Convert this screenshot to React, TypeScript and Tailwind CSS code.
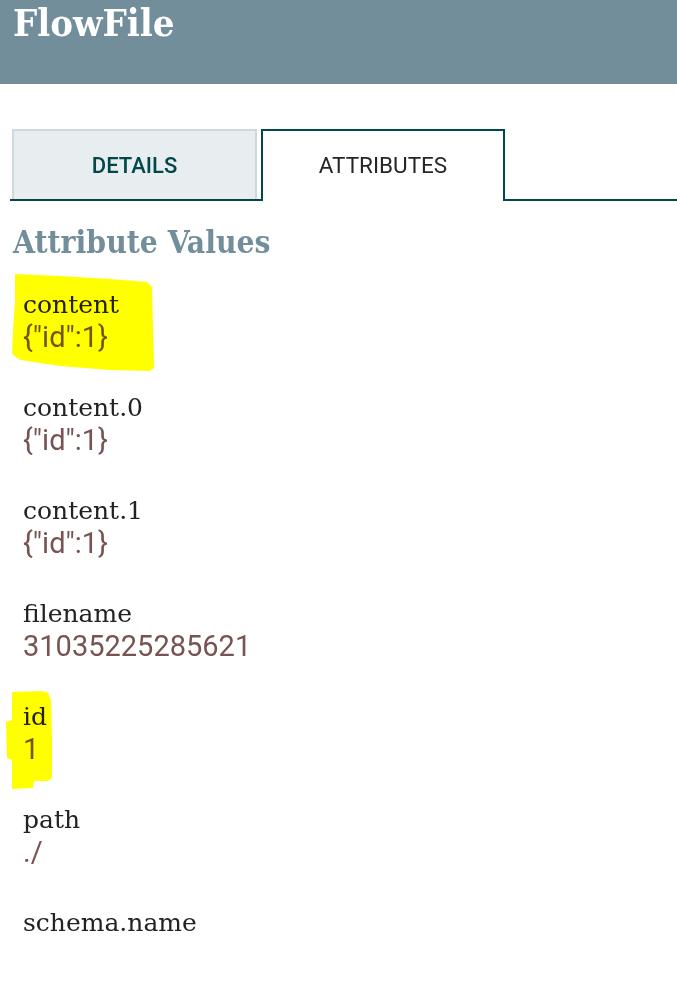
import React from "react";

const attrs: { name: string; value: string }[] = [
  { name: "content", value: '{"id":1}' },
  { name: "content.0", value: '{"id":1}' },
  { name: "content.1", value: '{"id":1}' },
  { name: "filename", value: "31035225285621" },
  { name: "id", value: "1" },
  { name: "path", value: "./" },
  { name: "schema.name", value: "" },
];

const slab = { fontFamily: '"DejaVu Serif Condensed", "DejaVu Serif", serif' };

export default function App() {
  return (
    <div className="relative w-[677px] h-[999px] overflow-hidden bg-white">
      <div className="h-[84px] bg-[#728e9b] pl-[13px]">
        <div className="text-white font-bold text-[38px] leading-[46px]" style={slab}>
          FlowFile
        </div>
      </div>

      <div className="flex items-end mt-[45px] pl-[10px]" style={{ fontFamily: "Roboto, sans-serif" }}>
        <div className="border-b-2 border-[#004849] pl-[2px] pr-[4px]">
          <div className="w-[245px] h-[70px] bg-[#e8edf0] border-2 border-b-0 border-[#cfd9dd] flex items-center justify-center text-[22px] font-medium text-[#004849]">
            DETAILS
          </div>
        </div>
        <div className="w-[244px] h-[72px] border-2 border-b-0 border-[#004849] bg-white flex items-center justify-center text-[22.5px] text-[#262626]">
          ATTRIBUTES
        </div>
        <div className="flex-1 border-b-2 border-[#004849]" />
      </div>

      <div
        className="mt-[21px] pl-[13px] text-[31.5px] leading-[40px] font-bold text-[#728e9b]"
        style={slab}
      >
        Attribute Values
      </div>

      <div className="mt-[26px] pl-[23px]">
        {attrs.map((a) => (
          <div key={a.name} className="mb-[39px]">
            <div
              className="text-[25px] leading-[34px] text-[#222222]"
              style={{ fontFamily: '"DejaVu Serif", serif' }}
            >
              {a.name}
            </div>
            <div
              className="text-[29px] leading-[30px] text-[#775351] h-[30px]"
              style={{ fontFamily: "Roboto, sans-serif" }}
            >
              {a.value}
            </div>
          </div>
        ))}
      </div>

      <svg
        className="absolute left-0 top-0 pointer-events-none mix-blend-multiply"
        width="677"
        height="999"
        viewBox="0 0 677 999"
      >
        <polygon
          fill="#ffff00"
          points="15,274 60,276 110,279 147,282 152,287 153,330 154,368 150,371 110,370 60,366 20,360 12,354 13,330 15,300"
        />
        <polygon
          fill="#ffff00"
          points="12,692 42,691 48,693 51,700 52,740 52,778 48,781 34,781 33,788 12,789 12,760 7,758 6,722 12,720"
        />
      </svg>
    </div>
  );
}
